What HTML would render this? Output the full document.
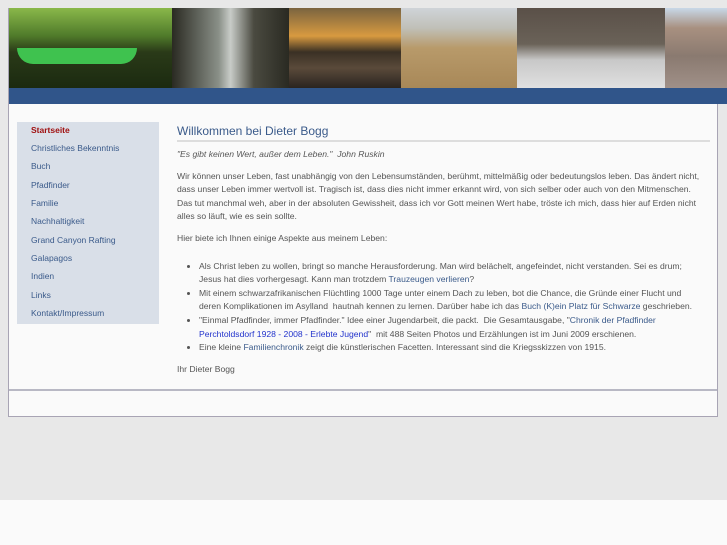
<!DOCTYPE html>
<html><head><meta charset="utf-8"><style>
*{margin:0;padding:0;box-sizing:border-box}
html,body{width:727px;height:545px;overflow:hidden;background:#fafafa;font-family:"Liberation Sans",sans-serif}
#bg{position:absolute;left:0;top:0;width:727px;height:500px;background:#e8e8e8}
#box{position:absolute;left:8px;top:8px;width:710px;height:409px;border:1px solid #a8a4b4;background:#fafafa}
.img{position:absolute;top:8px;height:80px}
#bar{position:absolute;left:9px;top:88px;width:718px;height:16px;background:#30558a}
#menu{position:absolute;left:17px;top:122px;width:142px;height:202px;background:#d9dfe8}
#menu div{position:absolute;left:14px;font-size:8.5px;color:#3a5a8a}
#foot{position:absolute;left:9px;top:389px;width:708px;height:2px;background:#b8b8c4}
#main{position:absolute;left:177px;top:124px;width:540px;font-size:8.6px;color:#555;line-height:13.6px;white-space:nowrap}
h1{font-size:12px;font-weight:normal;color:#3a5a8a;border-bottom:2px solid #ddd;padding-bottom:1px;line-height:15px;margin-bottom:6px;width:533px}
p{margin-bottom:8px}
ul{margin:14px 0 8px 22px}
a{color:#3a5a8a;text-decoration:none}
a.b{color:#2233cc}
</style></head><body>
<div id="bg"></div>
<div id="box"></div>
<div class="img" style="left:9px;width:163px;background:linear-gradient(180deg,#8ab84a 0%,#4f7a2a 35%,#2a3a18 55%,#1b2a10 100%)"><div style="position:absolute;left:8px;top:40px;width:120px;height:16px;background:#3fc24f;border-radius:0 0 40px 40px"></div></div>
<div class="img" style="left:172px;width:117px;background:linear-gradient(90deg,#2a2a22,#8a9088 40%,#c8ccc8 50%,#4a4a40 70%,#2a2a22)"></div>
<div class="img" style="left:289px;width:112px;background:linear-gradient(180deg,#7a6440 0%,#d89a40 35%,#3a3024 55%,#5a4a3a 75%,#2a2420)"></div>
<div class="img" style="left:401px;width:116px;background:linear-gradient(180deg,#cfd4d8 0%,#c0c0b8 25%,#b89a6a 50%,#a88858 100%)"></div>
<div class="img" style="left:517px;width:148px;background:linear-gradient(180deg,#5a5048 0%,#6a6258 45%,#c8c8c8 65%,#e0e0e0 100%)"></div>
<div class="img" style="left:665px;width:62px;background:linear-gradient(180deg,#c8d8e8 0%,#a89080 25%,#8a7a70 60%,#a09088)"></div>
<div id="bar"></div>
<div id="menu">
<div style="top:3px;color:#a01010;font-weight:bold">Startseite</div>
<div style="top:21px">Christliches Bekenntnis</div>
<div style="top:39px">Buch</div>
<div style="top:58px">Pfadfinder</div>
<div style="top:76px">Familie</div>
<div style="top:94px">Nachhaltigkeit</div>
<div style="top:113px">Grand Canyon Rafting</div>
<div style="top:131px">Galapagos</div>
<div style="top:149px">Indien</div>
<div style="top:168px">Links</div>
<div style="top:186px">Kontakt/Impressum</div>
</div>
<div id="main">
<h1>Willkommen bei Dieter Bogg</h1>
<p style="font-style:italic">"Es gibt keinen Wert, außer dem Leben."&nbsp; John Ruskin</p>
<p>Wir können unser Leben, fast unabhängig von den Lebensumständen, berühmt, mittelmäßig oder bedeutungslos leben. Das ändert nicht,<br>dass unser Leben immer wertvoll ist. Tragisch ist, dass dies nicht immer erkannt wird, von sich selber oder auch von den Mitmenschen.<br>Das tut manchmal weh, aber in der absoluten Gewissheit, dass ich vor Gott meinen Wert habe, tröste ich mich, dass hier auf Erden nicht<br>alles so läuft, wie es sein sollte.</p>
<p>Hier biete ich Ihnen einige Aspekte aus meinem Leben:</p>
<ul>
<li>Als Christ leben zu wollen, bringt so manche Herausforderung. Man wird belächelt, angefeindet, nicht verstanden. Sei es drum;<br>Jesus hat dies vorhergesagt. Kann man trotzdem <a>Trauzeugen verlieren</a>?</li>
<li>Mit einem schwarzafrikanischen Flüchtling 1000 Tage unter einem Dach zu leben, bot die Chance, die Gründe einer Flucht und<br>deren Komplikationen im Asylland&nbsp; hautnah kennen zu lernen. Darüber habe ich das <a>Buch (K)ein Platz für Schwarze</a> geschrieben.</li>
<li>"Einmal Pfadfinder, immer Pfadfinder." Idee einer Jugendarbeit, die packt.&nbsp; Die Gesamtausgabe, "<a>Chronik der Pfadfinder</a><br><a class="b">Perchtoldsdorf 1928 - 2008 - Erlebte Jugend</a>"&nbsp; mit 488 Seiten Photos und Erzählungen ist im Juni 2009 erschienen.</li>
<li>Eine kleine <a>Familienchronik</a> zeigt die künstlerischen Facetten. Interessant sind die Kriegsskizzen von 1915.</li>
</ul>
<p>Ihr Dieter Bogg</p>
</div>
<div id="foot"></div>
</body></html>
